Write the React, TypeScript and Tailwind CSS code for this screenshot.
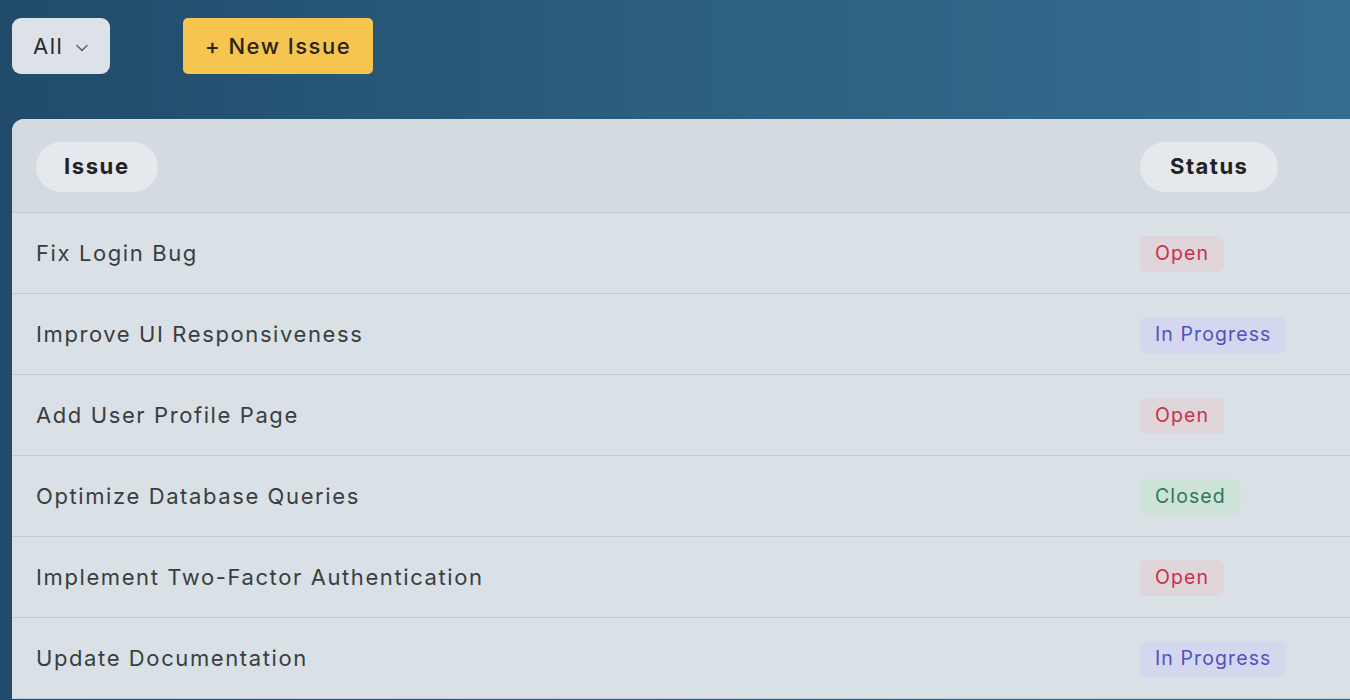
import { ChevronDown } from "lucide-react";

type Status = "Open" | "In Progress" | "Closed";

const issues: { title: string; status: Status }[] = [
  { title: "Fix Login Bug", status: "Open" },
  { title: "Improve UI Responsiveness", status: "In Progress" },
  { title: "Add User Profile Page", status: "Open" },
  { title: "Optimize Database Queries", status: "Closed" },
  { title: "Implement Two-Factor Authentication", status: "Open" },
  { title: "Update Documentation", status: "In Progress" },
];

const badgeStyles: Record<Status, string> = {
  Open: "bg-[#e0d5db] text-[#c8324a]",
  "In Progress": "bg-[#d3d8ee] text-[#5550bd]",
  Closed: "bg-[#cde2d9] text-[#2e7a52]",
};

const StatusBadge = ({ status }: { status: Status }) => {
  return (
    <span
      className={`inline-flex items-center h-[36px] mt-[2px] px-[15px] rounded-[6px] text-[19.5px] tracking-[1.1px] leading-none ${badgeStyles[status]}`}
    >
      {status}
    </span>
  );
};

const App = () => {
  return (
    <div
      className="w-[1350px] h-[700px] overflow-hidden bg-gradient-to-r from-[#214b6b] via-[#2c5f80] to-[#356d8f] pl-3 pt-[18px]"
      style={{ fontFamily: "Inter, 'Liberation Sans', sans-serif" }}
    >
      <div className="flex items-center gap-[73px]">
        <button className="flex items-center gap-[9px] h-14 w-[98px] pl-[21px] rounded-[9px] bg-[#dde2e8] text-[22px] tracking-[1.5px] text-[#2a2a2a]">
          All
          <ChevronDown size={20} strokeWidth={1.5} className="text-[#555] mt-[3px]" />
        </button>
        <button className="h-14 w-[190px] rounded-[5px] bg-[#f6c550] text-[22px] font-medium tracking-[1.5px] text-[#2a2410]">
          + New Issue
        </button>
      </div>

      <div className="mt-[45px] w-[1400px] rounded-tl-[12px] bg-white/80 overflow-hidden">
        <div className="grid grid-cols-[1104px_1fr] h-[94px] items-center border-b border-[#c3cbd0] bg-[#d3dbe1]">
          <div className="pl-6">
            <span className="inline-flex items-center h-[50px] mt-[2px] px-7 rounded-full bg-[#e5e8ec] text-[22px] font-bold tracking-[1.6px] text-[#222]">
              Issue
            </span>
          </div>
          <div className="pl-6">
            <span className="inline-flex items-center h-[50px] mt-[2px] px-[30px] rounded-full bg-[#e5e8ec] text-[22px] font-bold tracking-[1.5px] text-[#222]">
              Status
            </span>
          </div>
        </div>
        {issues.map((issue, index) => (
          <div
            key={index}
            className="grid grid-cols-[1104px_1fr] h-[81px] items-center border-b border-[#c3cbd0] bg-[#d9e1e6]"
          >
            <div className="pl-6 pt-[1px] text-[22px] tracking-[1.6px] text-[#3a3d40]">{issue.title}</div>
            <div className="pl-6">
              <StatusBadge status={issue.status} />
            </div>
          </div>
        ))}
      </div>
    </div>
  );
};

export default App;
